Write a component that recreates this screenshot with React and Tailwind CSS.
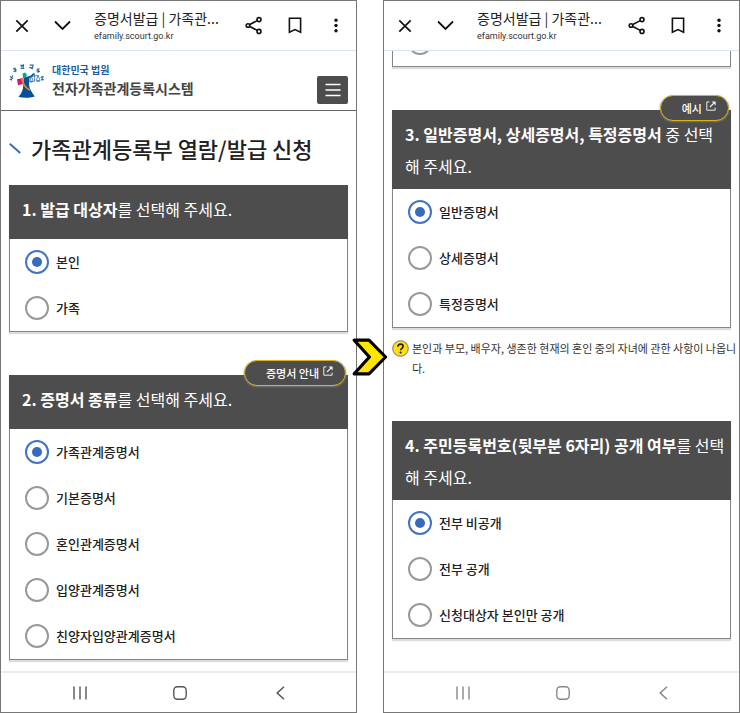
import React from "react";

const certificateTypes = [
  "가족관계증명서",
  "기본증명서",
  "혼인관계증명서",
  "입양관계증명서",
  "친양자입양관계증명서",
];

const CloseIcon = () => (
  <svg width="14" height="14" viewBox="0 0 14 14" fill="none" stroke="#111" strokeWidth="1.7">
    <path d="M1.3 1.3 12.7 12.7M12.7 1.3 1.3 12.7" />
  </svg>
);

const ChevronIcon = () => (
  <svg width="17" height="11" viewBox="0 0 17 11" fill="none" stroke="#111" strokeWidth="1.8">
    <path d="M1 1.5 8.5 9 16 1.5" />
  </svg>
);

const ShareIcon = () => (
  <svg width="18" height="19" viewBox="0 0 18 19" fill="none" stroke="#111" strokeWidth="1.6">
    <circle cx="3" cy="9.5" r="1.8" />
    <circle cx="14" cy="3.6" r="2" />
    <circle cx="14" cy="15.4" r="2" />
    <path d="M4.8 8.5 12.2 4.6M4.8 10.5 12.2 14.4" />
  </svg>
);

const BookmarkIcon = () => (
  <svg width="14" height="17" viewBox="0 0 14 17" fill="none" stroke="#111" strokeWidth="1.6">
    <path d="M1.4 1.3h11.2v14L7 12.6 1.4 15.3Z" />
  </svg>
);

const MoreIcon = () => (
  <svg width="4" height="15" viewBox="0 0 4 15" fill="#111">
    <circle cx="2" cy="2.2" r="1.7" />
    <circle cx="2" cy="7.5" r="1.7" />
    <circle cx="2" cy="12.8" r="1.7" />
  </svg>
);

const PopupIcon = () => (
  <svg className="-mt-1" width="10" height="10" viewBox="0 0 10 10" fill="none" stroke="#eee">
    <path d="M3.4 .9H.8v8.3h8.3V6.6" />
    <path d="M4 6 8.4 1.6" strokeWidth="1.3" />
    <path d="M5.6 .4h4v4Z" fill="#eee" stroke="none" />
  </svg>
);

const CourtLogo = () => (
  <svg width="36" height="36" viewBox="0 0 36 36" fill="none">
    <g stroke="#2b6cab" strokeWidth="1.2">
      <path d="m1 13.4 3 2.2M3.8 12.4l-1.4 3.8M.8 16l2.2 1.2" />
      <path d="m4 5.6 3 1M4.6 8.8l3-2M6 4.6l.8 4.6" />
      <path d="M11.4 2.4h3.6M14.4 1.2v3.4M11.6 5.4h3.6M11.8 3.6h1.6" />
      <path d="M20.6 2.2H24l-.4 2.2M20.2 4.6h4M21.8 4.8l2 1.2" />
      <path d="m27.4 7.4 3-2M27.8 8.8l3.2-.4M28.8 5.4l1.2 4" />
      <path d="m31.6 14.8 3.2-1M32 16.8l2.8-.2M32.8 13.2l.8 3.8" />
    </g>
    <path d="M14.6 14.4 20 13.2c1.8-.6 3-1.6 4.4-3.2l1 1.2c-1.2 2-2.8 3.2-5 4L20 22c.8 4.4 3 8 5.8 11.4-5.2 1.8-11.6 1.8-16.4.4 3-2.8 4.6-6.8 4.8-10.8Z" fill="#06509b" />
    <path d="M13.6 10.4 16 9.6l1.6 1.6-.2 3.2-3.4.6Z" fill="#12a08a" />
    <path d="M8 16.2 14 15v6l-5 1.2Z" fill="#d9127d" />
    <path d="M12.8 15.4c.8 5.8 3.4 9 8 12" stroke="#f08a1d" strokeWidth="1.6" />
    <path d="M25.6 10.4v8.4M22 13.4l7.6-1M22.4 13.4l-1.6 4.4M22.4 13.4l1.8 4.4M29 12.6l-1.6 4.6M29 12.6l2 4.6" stroke="#2b6cab" strokeWidth=".8" />
    <path d="M20.2 17.8h4.6c-.8 2.2-3.8 2.2-4.6 0ZM26.8 17.2h4.6c-.8 2.2-3.8 2.2-4.6 0Z" fill="#2b6cab" />
  </svg>
);

const Toolbar = () => (
  <div className="flex h-[50px] shrink-0 items-center border-b border-[#dbe4ec]">
    <button type="button" aria-label="닫기" className="flex h-10 w-[41px] items-center justify-center">
      <CloseIcon />
    </button>
    <button type="button" aria-label="펼치기" className="flex h-10 w-[41px] items-center justify-center">
      <ChevronIcon />
    </button>
    <div className="min-w-0 flex-1 pl-[11px]">
      <p className="whitespace-nowrap text-[14px] leading-5 text-[#222]">증명서발급 | 가족관...</p>
      <p className="font-[Roboto,sans-serif] text-[9px] leading-4 text-[#333]">efamily.scourt.go.kr</p>
    </div>
    <button type="button" aria-label="공유" className="flex h-10 w-[41px] items-center justify-center">
      <ShareIcon />
    </button>
    <button type="button" aria-label="북마크" className="flex h-10 w-[41px] items-center justify-center">
      <BookmarkIcon />
    </button>
    <button type="button" aria-label="더보기" className="flex h-10 w-[41px] items-center justify-center">
      <MoreIcon />
    </button>
  </div>
);

const NavBar = ({ className }) => (
  <nav className={`mt-auto flex h-[41px] shrink-0 justify-center border-t-2 border-[#ececec] pl-[3px] ${className}`}>
    <button type="button" aria-label="최근 앱" className="flex w-[100px] items-center justify-center">
      <svg width="14" height="14" viewBox="0 0 14 14" fill="none" stroke="currentColor" strokeWidth="1.4">
        <path d="M1 .5v13M7 .5v13M13 .5v13" />
      </svg>
    </button>
    <button type="button" aria-label="홈" className="flex w-[100px] items-center justify-center">
      <svg width="14" height="14" viewBox="0 0 14 14" fill="none" stroke="currentColor" strokeWidth="1.4">
        <rect x=".8" y=".8" width="12.4" height="12.4" rx="3.6" />
      </svg>
    </button>
    <button type="button" aria-label="뒤로" className="flex w-[100px] items-center justify-center">
      <svg width="9" height="14" viewBox="0 0 9 14" fill="none" stroke="currentColor" strokeWidth="1.5">
        <path d="M8 .8 1.2 7 8 13.2" />
      </svg>
    </button>
  </nav>
);

const Option = ({ name, label, checked }) => (
  <label className="flex h-[46px] items-center gap-[7px] pl-[15px] text-[13px] font-medium text-[#222]">
    <input
      type="radio"
      name={name}
      defaultChecked={checked}
      className="size-6 shrink-0 appearance-none rounded-full border-2 border-[#999] bg-clip-content p-[5px] checked:border-[#4273c4] checked:bg-[#386bbd]"
    />
    {label}
  </label>
);

const Section = ({ name, title, options, badge }) => (
  <section className="relative border border-[#858585] shadow-[0_2px_1px_#dcdcdc]">
    <h2 className="-m-px min-h-[54px] bg-[#4d4d4d] pt-2 pr-[6px] pb-[7px] pl-[13px] text-[16px] leading-8 text-white">
      {title}
    </h2>
    {badge && (
      <button
        type="button"
        className="absolute -top-4 right-px flex h-[26px] items-center gap-1 rounded-full border border-[#d8b51c] bg-[#4d4d4d] pr-3 pl-[21px] text-[11px] font-medium text-white shadow-[0_1px_2px_#777]"
      >
        {badge}
        <PopupIcon />
      </button>
    )}
    <div className="pt-px">
      {options.map((label, i) => (
        <Option key={label} name={name} label={label} checked={i === 0} />
      ))}
    </div>
  </section>
);

const Phone = ({ children }) => (
  <div className="flex min-w-0 flex-1 flex-col border border-[#777] bg-white">{children}</div>
);

const App = () => {
  return (
    <div className="flex bg-white font-['Noto_Sans_CJK_KR',sans-serif]">
      <Phone>
        <Toolbar />
        <header className="flex h-[60px] shrink-0 items-center border-b border-[#666] px-2">
          <CourtLogo />
          <div className="flex-1 pb-[2px] pl-[7px] font-bold">
            <p className="text-[10px] leading-4 text-[#1c5c9e]">대한민국 법원</p>
            <p className="text-[14px] leading-5 text-[#444]">전자가족관계등록시스템</p>
          </div>
          <button
            type="button"
            aria-label="메뉴"
            className="mt-[18px] flex h-7 w-[31px] items-center justify-center rounded-xs bg-[#4d4d4d]"
          >
            <svg width="16" height="14" viewBox="0 0 16 14" stroke="#fff" strokeWidth="1.3">
              <path d="M.5 1.5h15M.5 7h15M.5 12.5h15" />
            </svg>
          </button>
        </header>
        <main className="px-2 pb-[11px]">
          <div className="flex h-[74px] items-center gap-[10px] text-[#222]">
            <svg width="12" height="11" viewBox="0 0 12 11" fill="none" stroke="#386bbd" strokeWidth="2">
              <path d="M.8 .8 11.2 10" />
            </svg>
            <h1 className="text-[22px] leading-8 font-medium">가족관계등록부 열람/발급 신청</h1>
          </div>
          <div className="flex flex-col gap-[43px]">
            <Section
              name="target"
              title={
                <>
                  <span className="font-bold">1. 발급 대상자</span>를 선택해 주세요.
                </>
              }
              options={["본인", "가족"]}
            />
            <Section
              name="certificate"
              badge="증명서 안내"
              title={
                <>
                  <span className="font-bold">2. 증명서 종류</span>를 선택해 주세요.
                </>
              }
              options={certificateTypes}
            />
          </div>
        </main>
        <NavBar className="text-[#555]" />
      </Phone>

      {/* Step arrow */}
      <div className="z-10 flex w-[26px] shrink-0 items-center justify-center">
        <svg className="shrink-0" width="36" height="38" viewBox="0 0 36 38">
          <path
            d="M2.2 2.2H17L33.6 19 17 35.8H2.2L17.4 19Z"
            fill="#ffe600"
            stroke="#000"
            strokeWidth="3.2"
            strokeLinejoin="round"
          />
        </svg>
      </div>

      <Phone>
        <Toolbar />
        <main className="px-2">
          {/* End of the previous section, scrolled under the toolbar */}
          <div className="flex h-4 flex-col justify-end overflow-hidden border-x border-b border-[#858585] pb-[11px] pl-[15px] shadow-[0_2px_1px_#dcdcdc]">
            <span className="size-6 shrink-0 rounded-full border-2 border-[#999]" />
          </div>
          <div className="pt-[43px]">
            <Section
              name="detail"
              badge="예시"
              title={
                <>
                  <span className="font-bold">3. 일반증명서, 상세증명서, 특정증명서</span> 중 선택해 주세요.
                </>
              }
              options={["일반증명서", "상세증명서", "특정증명서"]}
            />
          </div>
          <div className="-mr-2 flex gap-[3px] pt-[10px] pb-[43px] text-[#333]">
            <svg className="mt-[2px] shrink-0" width="17" height="17" viewBox="0 0 17 17" fill="none">
              <circle cx="8.5" cy="8.5" r="7.8" fill="#ffdd15" stroke="#777" />
              <path
                d="M5.9 6.8C5.9 5.2 7 4.2 8.5 4.2S11.1 5.1 11.1 6.5c0 1.8-2.5 1.9-2.5 3.8"
                stroke="#222"
                strokeWidth="1.7"
              />
              <circle cx="8.6" cy="12.5" r="1.1" fill="#222" />
            </svg>
            <p className="text-[11px] leading-5">
              본인과 부모, 배우자, 생존한 현재의 혼인 중의 자녀에 관한 사항이 나옵니다.
            </p>
          </div>
          <Section
            name="disclosure"
            title={
              <>
                <span className="font-bold">4. 주민등록번호(뒷부분 6자리) 공개 여부</span>를 선택해 주세요.
              </>
            }
            options={["전부 비공개", "전부 공개", "신청대상자 본인만 공개"]}
          />
        </main>
        <NavBar className="text-[#888]" />
      </Phone>
    </div>
  );
};

export default App;
